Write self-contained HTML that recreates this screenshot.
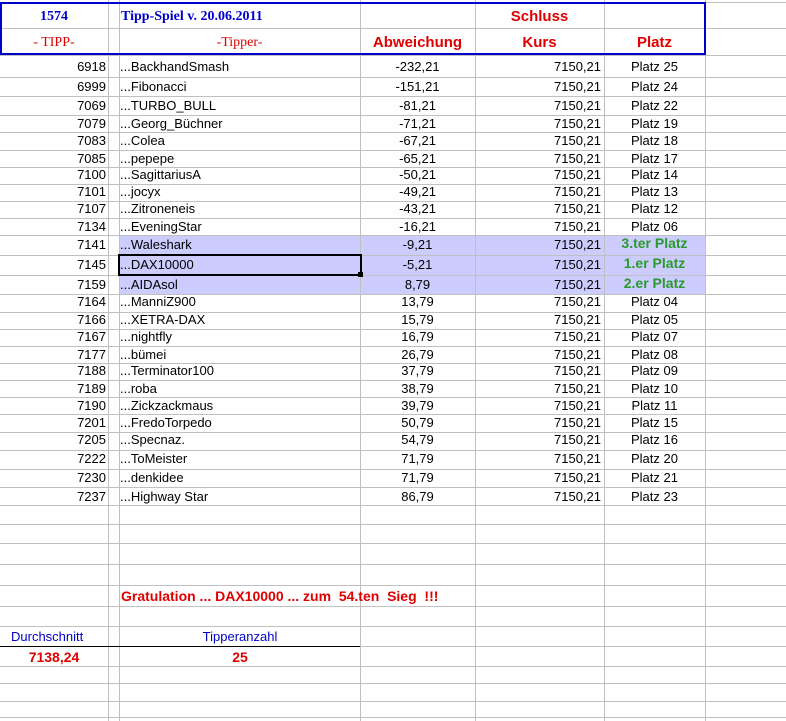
<!DOCTYPE html>
<html><head><meta charset="utf-8"><style>
body{margin:0;width:786px;height:721px;background:#fff;position:relative;overflow:hidden;font-family:"Liberation Sans",Arial,sans-serif;font-size:13px;color:#000}
.h{position:absolute;left:0;width:786px;height:1px;background:#c0c0c0}
.v{position:absolute;top:0;height:721px;width:1px;background:#c0c0c0}
.t{position:absolute;white-space:nowrap;line-height:16px}
</style></head><body>
<div id="g"></div>
<script>
var b=[2,28,55,77,96,115,132,150,167,184,201,218,235,255,275,294,312,329,346,363,380,397,414,432,450,469,487,505,524,543,564,585,606,626,646,666,683,701,717];
var cols=[108,119,360,475,604,705];
var h='';
h+='<div style="position:absolute;left:119px;top:235px;width:586px;height:60px;background:#ccccff"></div>';
b.forEach(function(y){h+='<div class="h" style="top:'+y+'px"></div>'});
cols.forEach(function(x){h+='<div class="v" style="left:'+x+'px"></div>'});
var rows=[["6918","BackhandSmash","-232,21","Platz 25"],["6999","Fibonacci","-151,21","Platz 24"],["7069","TURBO_BULL","-81,21","Platz 22"],["7079","Georg_Büchner","-71,21","Platz 19"],["7083","Colea","-67,21","Platz 18"],["7085","pepepe","-65,21","Platz 17"],["7100","SagittariusA","-50,21","Platz 14"],["7101","jocyx","-49,21","Platz 13"],["7107","Zitroneneis","-43,21","Platz 12"],["7134","EveningStar","-16,21","Platz 06"],["7141","Waleshark","-9,21","3.ter Platz"],["7145","DAX10000","-5,21","1.er Platz"],["7159","AIDAsol","8,79","2.er Platz"],["7164","ManniZ900","13,79","Platz 04"],["7166","XETRA-DAX","15,79","Platz 05"],["7167","nightfly","16,79","Platz 07"],["7177","bümei","26,79","Platz 08"],["7188","Terminator100","37,79","Platz 09"],["7189","roba","38,79","Platz 10"],["7190","Zickzackmaus","39,79","Platz 11"],["7201","FredoTorpedo","50,79","Platz 15"],["7205","Specnaz.","54,79","Platz 16"],["7222","ToMeister","71,79","Platz 20"],["7230","denkidee","71,79","Platz 21"],["7237","Highway Star","86,79","Platz 23"]];
var ys=[67,87,106,124,141,159,175,192,209,227,245,265,285,302,320,337,355,371,389,406,423,440,459,478,497];
rows.forEach(function(r,i){var y=ys[i]-8;
h+='<div class="t" style="top:'+y+'px;right:'+(786-106)+'px">'+r[0]+'</div>';
h+='<div class="t" style="top:'+y+'px;left:120px">...'+r[1]+'</div>';
h+='<div class="t" style="top:'+y+'px;left:360px;width:115px;text-align:center">'+r[2]+'</div>';
h+='<div class="t" style="top:'+y+'px;right:'+(786-601)+'px">7150,21</div>';
var g=(i>=10&&i<=12);
h+='<div class="t" style="top:'+(g?y-2:y)+'px;left:604px;width:101px;text-align:center;'+(g?'color:#2a9a2a;font-weight:bold;font-size:14px':'')+'">'+r[3]+'</div>';
});
document.getElementById('g').innerHTML=h;
</script>
<div style="position:absolute;left:0;top:2px;width:702px;height:49px;border:2px solid #0000cc"></div>
<div style="position:absolute;left:118px;top:254px;width:240px;height:18px;border:2px solid #000"></div>
<div style="position:absolute;left:358px;top:272px;width:5px;height:5px;background:#000"></div>
<div class="t" style="top:9px;left:0;width:108px;text-align:center;font-family:'Liberation Serif',serif;font-weight:bold;color:#0000cc;font-size:14px">1574</div>
<div class="t" style="top:9px;left:121px;font-family:'Liberation Serif',serif;font-weight:bold;color:#0000cc;font-size:14px">Tipp-Spiel v. 20.06.2011</div>
<div class="t" style="top:9px;left:475px;width:129px;text-align:center;font-weight:bold;color:#e00000;font-size:15px">Schluss</div>
<div class="t" style="top:35px;left:0;width:108px;text-align:center;font-family:'Liberation Serif',serif;color:#e00000;font-size:14px">- TIPP-</div>
<div class="t" style="top:35px;left:119px;width:241px;text-align:center;font-family:'Liberation Serif',serif;color:#e00000;font-size:14px">-Tipper-</div>
<div class="t" style="top:35px;left:360px;width:115px;text-align:center;font-weight:bold;color:#e00000;font-size:15px">Abweichung</div>
<div class="t" style="top:35px;left:475px;width:129px;text-align:center;font-weight:bold;color:#e00000;font-size:15px">Kurs</div>
<div class="t" style="top:35px;left:604px;width:101px;text-align:center;font-weight:bold;color:#e00000;font-size:15px">Platz</div>
<div class="t" style="top:588px;left:121px;font-weight:bold;color:#e00000;font-size:14px">Gratulation ... DAX10000 ... zum&nbsp; 54.ten&nbsp; Sieg&nbsp; !!!</div>
<div class="t" style="top:629px;left:11px;color:#0000cc">Durchschnitt</div>
<div class="t" style="top:629px;left:150px;width:180px;text-align:center;color:#0000cc">Tipperanzahl</div>
<div style="position:absolute;left:0;top:646px;width:360px;height:1px;background:#000"></div>
<div class="t" style="top:649px;left:0;width:108px;text-align:center;font-weight:bold;color:#e00000;font-size:14px">7138,24</div>
<div class="t" style="top:649px;left:150px;width:180px;text-align:center;font-weight:bold;color:#e00000;font-size:14px">25</div>
</body></html>
